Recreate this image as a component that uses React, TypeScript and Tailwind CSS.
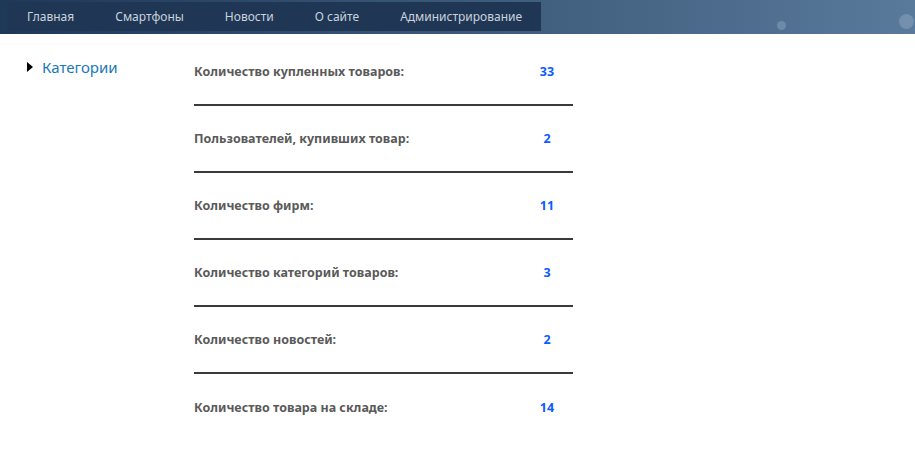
const nav = ['Главная', 'Смартфоны', 'Новости', 'О сайте', 'Администрирование'];

const stats = [
  { label: 'Количество купленных товаров:', value: '33' },
  { label: 'Пользователей, купивших товар:', value: '2' },
  { label: 'Количество фирм:', value: '11' },
  { label: 'Количество категорий товаров:', value: '3' },
  { label: 'Количество новостей:', value: '2' },
  { label: 'Количество товара на складе:', value: '14' },
];

export default function App() {
  return (
    <div className="min-h-screen bg-white font-['Noto_Sans',sans-serif]">
      {/* header */}
      <div className="relative h-[34px] bg-gradient-to-r from-[#1e3858] via-[#3b5979] to-[#5a7a9b] pt-[2px] pl-[7px]">
        <ul className="flex h-[29px] w-[534px] items-center gap-[41px] bg-[#1f3655] pl-[20px] text-[12px] text-[#c9d3dd]">
          {nav.map((item) => (
            <li key={item} className="whitespace-nowrap">
              {item}
            </li>
          ))}
        </ul>
        <span className="absolute left-[777px] top-[21px] h-[9px] w-[9px] rounded-full bg-[#8aa3bd] opacity-50" />
        <span className="absolute left-[899px] top-[14px] h-[15px] w-[15px] rounded-full bg-[#8ea6bf] opacity-50" />
      </div>

      <div className="flex pt-[5px]">
        {/* sidebar */}
        <div className="w-[194px] shrink-0 pl-[27px] pt-[17px]">
          <div className="flex items-center">
            <span className="mr-[9px] h-0 w-0 border-y-[5px] border-l-[6px] border-y-transparent border-l-black" />
            <span className="text-[15px] text-[#1b78b5]">Категории</span>
          </div>
        </div>

        {/* stats */}
        <div className="w-[379px]">
          {stats.map((s, i) => (
            <div
              key={s.label}
              className={
                i < stats.length - 1
                  ? 'flex h-[67px] items-center border-b-2 border-[#3a3a3a] pt-[2px]'
                  : 'flex h-[67px] items-center pt-[2px]'
              }
            >
              <div className="w-[327px] text-[12.5px] font-bold text-[#5a5a5a]">{s.label}</div>
              <div className="w-[52px] text-center text-[12.5px] font-bold text-[#0a5cff]">{s.value}</div>
            </div>
          ))}
        </div>
      </div>
    </div>
  );
}
